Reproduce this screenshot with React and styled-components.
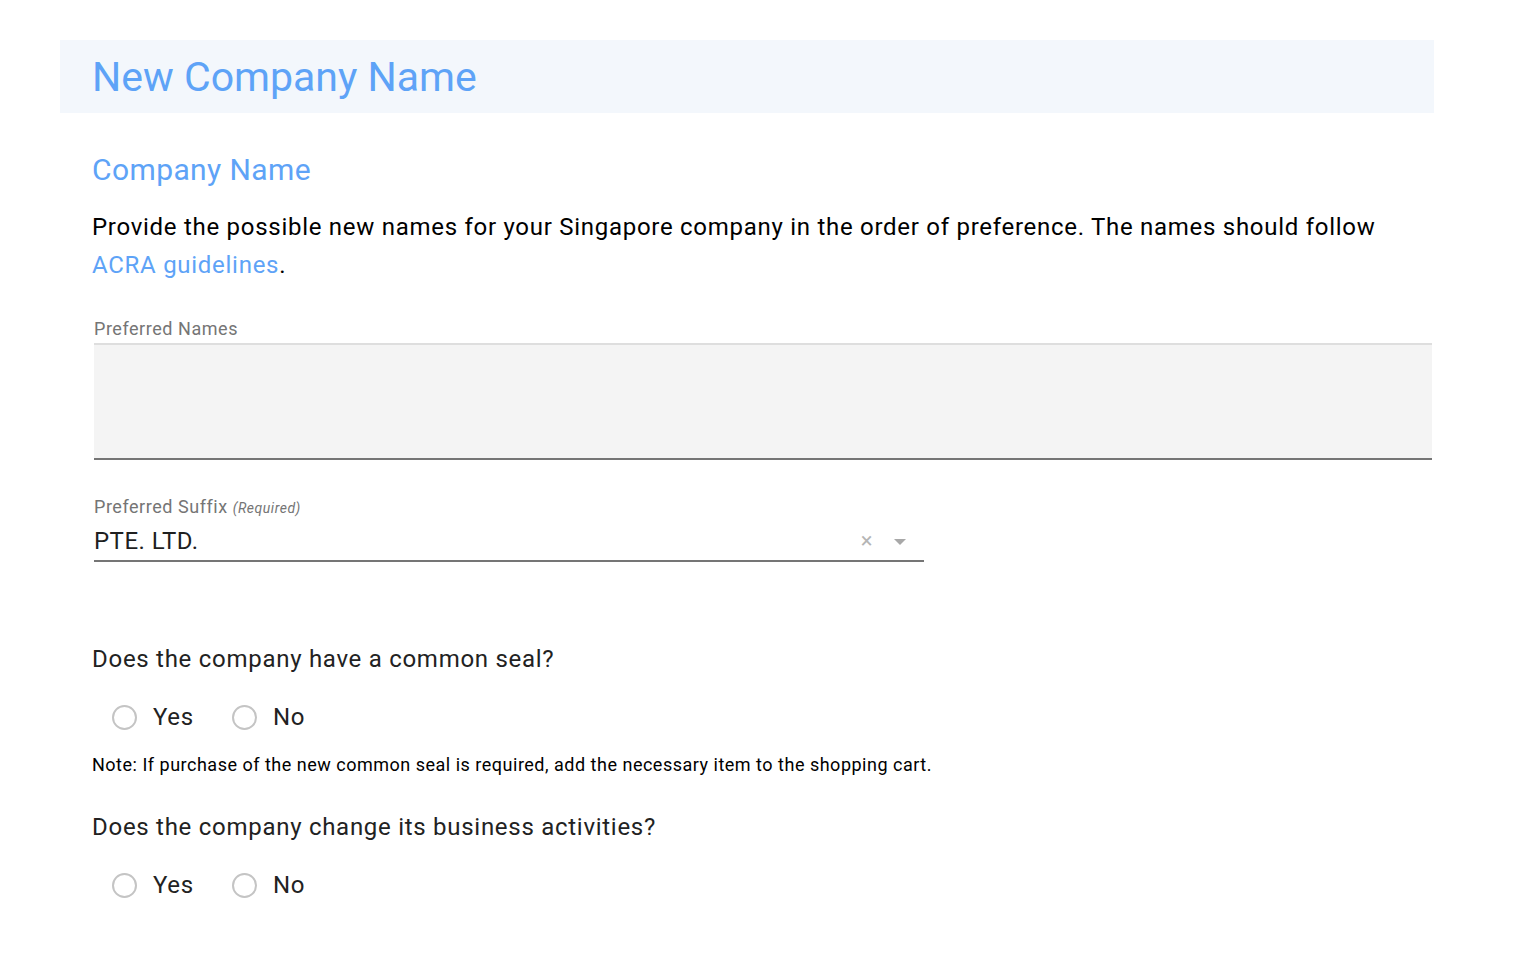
import React from 'react';
import styled, { createGlobalStyle } from 'styled-components';

const GlobalStyle = createGlobalStyle`
  body {
    margin: 0;
    background: #ffffff;
    font-family: Roboto, "Liberation Sans", sans-serif;
  }
`;

const Page = styled("div")`
  width: 1374px;
  padding: 40px 0 40px 60px;
`;

const Banner = styled("div")`
  background: #f3f7fc;
  height: 73px;
  display: flex;
  align-items: center;
  padding-left: 32px;
`;

const PageTitle = styled("h1")`
  margin: 0;
  font-size: 41px;
  font-weight: 400;
  color: #5ea3f7;
  line-height: 1;
  margin-top: 2px;
`;

const Body = styled("div")`
  padding: 0 2px 0 32px;
  display: flex;
  flex-direction: column;
`;

const SectionTitle = styled("h2")`
  margin: 39px 0 0;
  font-size: 30px;
  font-weight: 400;
  color: #5ea3f7;
  line-height: 36px;
  letter-spacing: 0.4px;
`;

const Lead = styled("p")`
  margin: 20px 0 0;
  font-size: 24px;
  line-height: 38px;
  color: #000;
  letter-spacing: 0.03em;
`;

const Link = styled("a")`
  color: #5ea3f7;
  text-decoration: none;
`;

const Field = styled("div")`
  margin-top: ${p => p.top}px;
  padding-left: 2px;
  width: ${p => p.width || 'auto'};
`;

const Label = styled("div")`
  font-size: 18px;
  color: #757575;
  line-height: 22px;
  letter-spacing: 0.03em;
`;

const Hint = styled("i")`
  font-size: 14px;
`;

const TextArea = styled("div")`
  margin-top: 3px;
  height: 113px;
  background: #f4f4f4;
  border-top: 2px solid #dedede;
  border-bottom: 2px solid #757575;
`;

const Select = styled("div")`
  display: flex;
  align-items: center;
  height: 43px;
  padding-top: 2px;
  box-sizing: border-box;
  border-bottom: 2px solid #757575;
  font-size: 24px;
  color: #1f1f1f;
  letter-spacing: 0.02em;
`;

const Value = styled("span")`
  flex: 1;
`;

const Clear = styled("span")`
  color: #b5b5b5;
  font-size: 22px;
  margin-right: 21px;
  line-height: 1;
`;

const Caret = styled("span")`
  width: 0;
  height: 0;
  border-left: 6px solid transparent;
  border-right: 6px solid transparent;
  border-top: 6px solid #a8a8a8;
  margin-right: 18px;
  margin-top: 2px;
`;

const Question = styled("div")`
  margin-top: ${p => p.top}px;
  font-size: 24px;
  color: #222;
  line-height: 30px;
  letter-spacing: 0.03em;
`;

const RadioRow = styled("div")`
  display: flex;
  align-items: center;
  gap: 38px;
  margin-top: 29px;
  padding-left: 20px;
`;

const RadioItem = styled("label")`
  display: flex;
  align-items: center;
  gap: 16px;
  font-size: 24px;
  color: #222;
  letter-spacing: 0.03em;
`;

const Circle = styled("span")`
  width: 21px;
  height: 21px;
  border-radius: 50%;
  border: 2px solid #c4c4c4;
`;

const Note = styled("div")`
  margin-top: 23px;
  font-size: 18px;
  color: #000;
  line-height: 22px;
  letter-spacing: 0.028em;
`;

const YesNo = () => (
  <RadioRow>
    <RadioItem><Circle />Yes</RadioItem>
    <RadioItem><Circle />No</RadioItem>
  </RadioRow>
);

export default function App() {
  return (
    <>
      <GlobalStyle />
      <Page>
        <Banner>
          <PageTitle>New Company Name</PageTitle>
        </Banner>
        <Body>
          <SectionTitle>Company Name</SectionTitle>
          <Lead>
            Provide the possible new names for your Singapore company in the order of preference. The names should follow{' '}
            <Link href="#">ACRA guidelines</Link>.
          </Lead>
          <Field top={34}>
            <Label>Preferred Names</Label>
            <TextArea />
          </Field>
          <Field top={36} width="830px">
            <Label>Preferred Suffix <Hint>(Required)</Hint></Label>
            <Select>
              <Value>PTE. LTD.</Value>
              <Clear>×</Clear>
              <Caret />
            </Select>
          </Field>
          <Question top={82}>Does the company have a common seal?</Question>
          <YesNo />
          <Note>Note: If purchase of the new common seal is required, add the necessary item to the shopping cart.</Note>
          <Question top={36}>Does the company change its business activities?</Question>
          <YesNo />
        </Body>
      </Page>
    </>
  );
}
